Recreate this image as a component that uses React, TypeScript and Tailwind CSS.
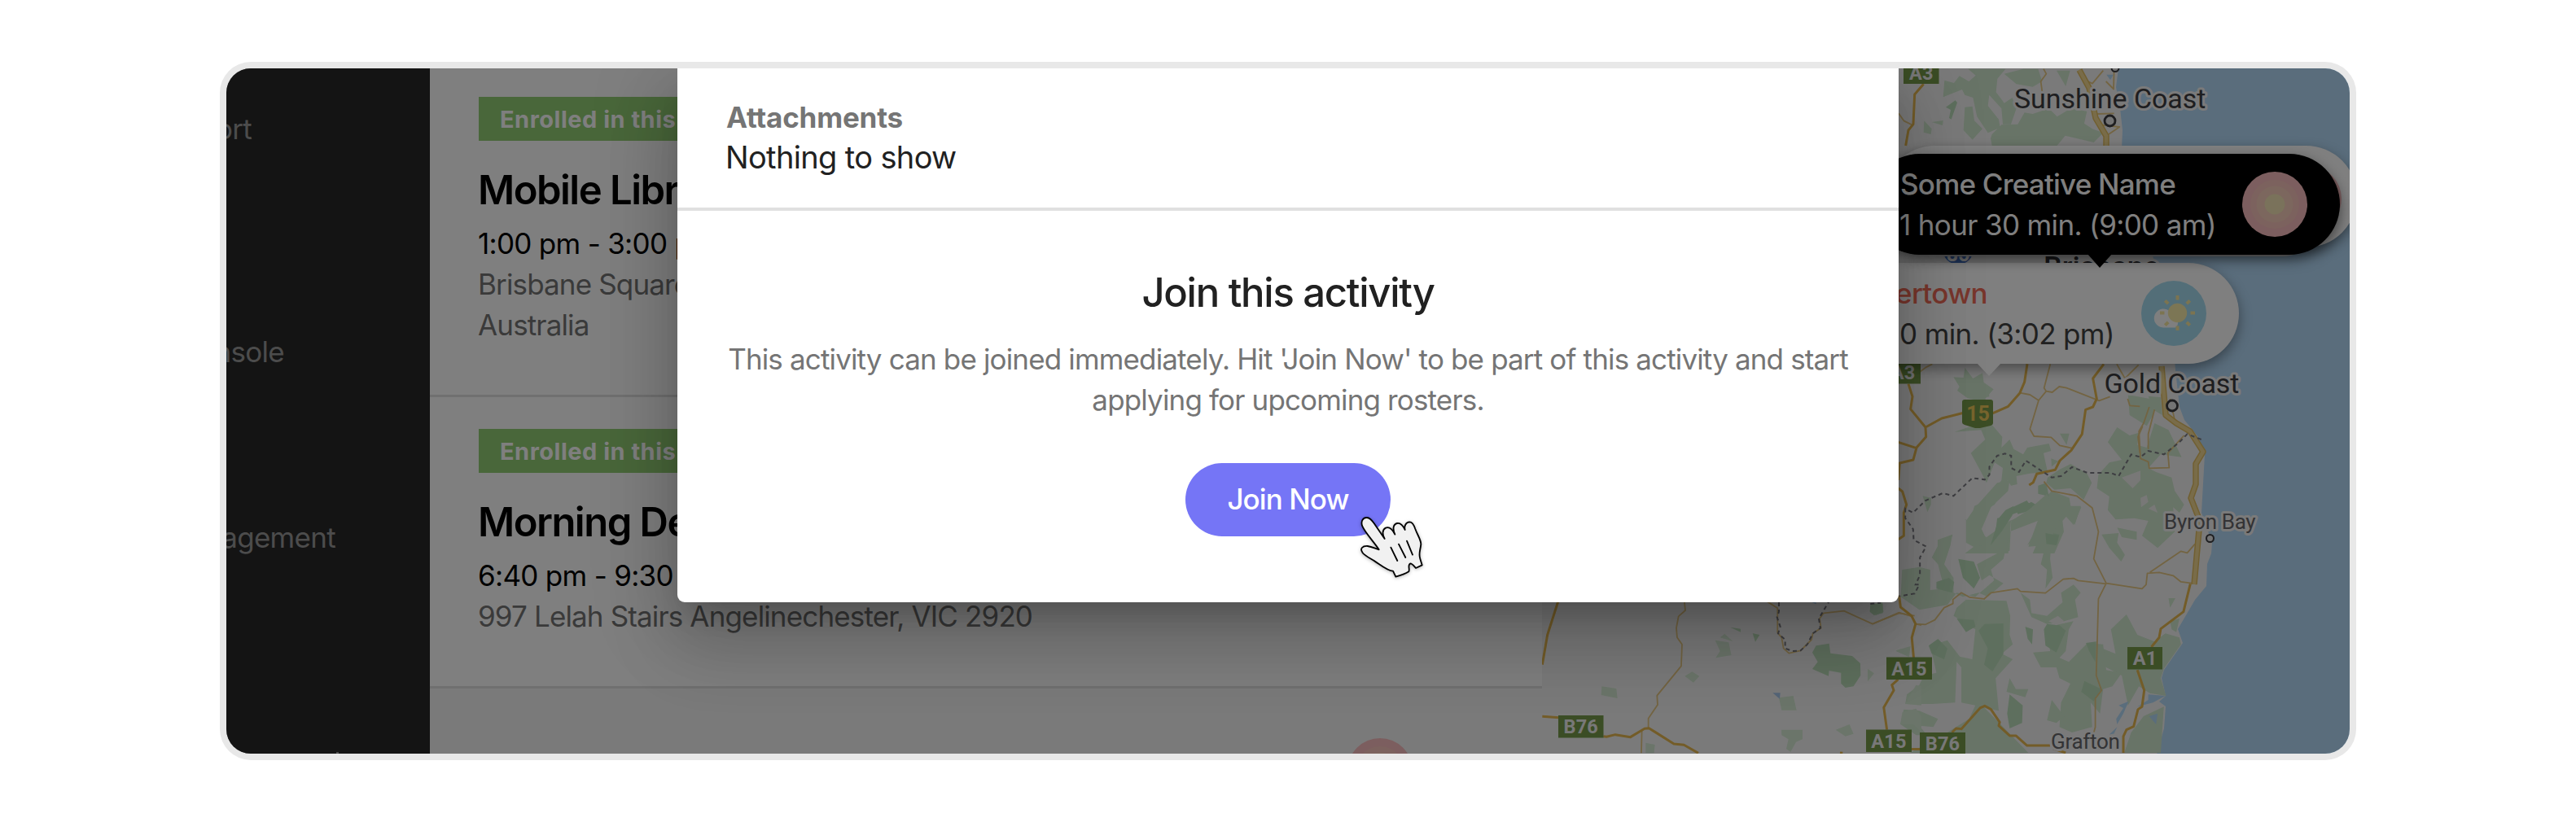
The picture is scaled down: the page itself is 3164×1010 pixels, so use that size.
import type { ReactNode } from "react";

const navItems = [
  { label: "Report", width: "w-[31px]", offset: "mt-[49px]" },
  { label: "Console", width: "w-[71px]", offset: "mt-[224px]" },
  { label: "Management", width: "w-[134px]", offset: "mt-[178px]" },
];

function Sidebar() {
  return (
    <nav className="flex w-[250px] shrink-0 flex-col bg-[#282828] text-[35px] leading-[50px] tracking-[-0.02em] text-[#989898]">
      {navItems.map((item) => (
        <div key={item.label} className={`flex justify-end whitespace-nowrap ${item.width} ${item.offset}`}>
          {item.label}
        </div>
      ))}
      <div className="mt-[239px] ml-[135px] h-[3px] w-[3px] bg-[#989898]" />
    </nav>
  );
}

type Activity = { title: string; time: string; address: string[] };

const activities: Activity[] = [
  {
    title: "Mobile Library",
    time: "1:00 pm - 3:00 pm",
    address: ["Brisbane Square Library, Brisbane,", "Australia"],
  },
  {
    title: "Morning Delivery",
    time: "6:40 pm - 9:30 pm",
    address: ["997 Lelah Stairs Angelinechester, VIC 2920"],
  },
];

function ActivityCard({ activity }: { activity: Activity }) {
  return (
    <article className="border-b-[3px] border-[#e0e0e0] bg-white px-[60px] pb-[61px] whitespace-nowrap">
      <div className="flex h-[54px] w-[420px] items-center bg-[#92ce74] pt-[2px] pl-[26px] text-[29px] font-bold tracking-[0.017em] text-white">
        Enrolled in this activity
      </div>
      <h3 className="mt-[31px] -ml-px text-[49px] leading-[60px] font-semibold tracking-[-0.031em] text-black">
        {activity.title}
      </h3>
      <p className="mt-[10px] -ml-px text-[35px] leading-[50px] tracking-[-0.02em] text-black">{activity.time}</p>
      {activity.address.map((line) => (
        <p key={line} className="-ml-px text-[35px] leading-[50px] tracking-[-0.0245em] text-[#757575]">
          {line}
        </p>
      ))}
    </article>
  );
}

/* Concentric sunrise badge used by the morning activities. */
function SunriseIcon({ className }: { className: string }) {
  return (
    <svg viewBox="0 0 80 80" className={className}>
      <circle cx="40" cy="40" r="40" fill="#f8bcbe" />
      <circle cx="40" cy="40" r="30" fill="#f8c4bc" />
      <circle cx="40" cy="40" r="22.5" fill="#f8cebc" />
      <circle cx="40" cy="40" r="12.5" fill="#f4e4b6" />
    </svg>
  );
}

function PartlyCloudyIcon({ className }: { className: string }) {
  const rays = [0, 45, 90, 135, 180, 225, 270, 315];
  return (
    <svg viewBox="0 0 80 80" className={className}>
      <circle cx="40" cy="40" r="40" fill="#a6dcf0" />
      <path d="M27 57.500a11.500 11.500 0 1 1 9-19l9 12a8 8 0 0 1-3 7z" fill="#fff" />
      {rays.map((angle) => (
        <path key={angle} d="M44.500 18v5.500" stroke="#f8e9a0" strokeWidth="4" transform={`rotate(${angle} 44.500 39.500)`} />
      ))}
      <circle cx="44.500" cy="39.500" r="11.700" fill="#f9ecaa" />
    </svg>
  );
}

function Shield({ x, y, w, children }: { x: number; y: number; w: number; children: ReactNode }) {
  return (
    <g>
      <rect x={x} y={y} width={w} height="27.500" fill="#769a4a" />
      <text
        x={x + w / 2}
        y={y + 22}
        textAnchor="middle"
        fill="#f0f0f0"
        className="font-[Roboto] text-[23.500px] font-bold tracking-[0.01em]"
      >
        {children}
      </text>
    </g>
  );
}

function MapCanvas() {
  return (
    <svg viewBox="1894 84 992 842" width="992" height="842" className="block">
      <rect x="1894" y="84" width="992" height="842" fill="#f5f5f5" />

      {/* Ocean */}
      <path
        d="M2602 84L2599 107L2604 133L2607 160L2606 182L2640 300L2668 400L2672 455L2677 500L2683 516L2700 537L2708 558L2704 630L2717 667L2716 680L2711 693L2710 720L2696 737L2675 773L2681 790L2658 823L2655 833L2660 855L2652 862L2660 868L2658 895L2649 927H2886V84Z"
        fill="#b4daf8"
      />

      {/* Forests and reserves */}
      <g transform="translate(2330 80) scale(.3333)" fill="#d0e8ce">
        <path d="M175 56L210 66L230 40L265 60L290 38L262 14H345L400 14L370 50L365 100L388 130L395 140L425 120L440 160L420 218H390L385 160L340 110L335 150L375 200L380 230L335 250L295 190L280 120L250 110L240 90L170 118Z" />
        <path d="M395 32L465 14H520L535 60L500 80L440 70Z" />
        <path d="M350 255L385 220L445 218L470 175L500 180L560 160L590 190L640 160L700 170L690 215L720 235L760 250L725 285L620 260L590 297H440L350 297L345 270Z" />
        <path d="M588 20H638L622 78Z" />
        <path d="M250 155L278 152L285 205L315 235L278 275L245 240Z" />
        <path d="M100 205L128 235L125 255L98 248ZM128 210L170 204L168 222Z" />
        <path d="M180 155L215 130L222 138L200 200L192 195L198 165Z" fill="#bcdfbc" />
      </g>
      <g transform="translate(2330 440) scale(.3333)" fill="#d0e8ce">
        <path d="M208 70L245 72L250 35L280 75L315 55L320 90L356 115L325 150L335 165L260 148L222 120L230 105Z" />
        <path d="M212 272L262 255L345 240L388 290L385 330L415 300L430 335L465 355L480 330L560 315L568 342L540 350L555 420L490 425L440 435L443 465L420 470L408 450L360 540L320 560L300 590L290 640L330 660L415 600L470 580L540 520L570 490L635 515L640 545L678 545L655 615L632 575L610 600L615 640L580 720H500L530 650L480 690L520 620L525 580L420 600L410 720H250L290 690L270 650L268 610L250 595L272 600L285 545L340 520L385 450L390 405L360 385L330 460L310 420L272 350L325 300L310 265Z" />
        <path d="M150 670L205 650L195 690L165 720H150ZM95 508L125 515L125 540L112 568Z" />
        <path d="M555 440L600 410L640 390L700 425L718 460L688 522L640 480L580 485L550 460Z" />
        <path d="M568 370L595 380L570 400ZM600 278H635L625 320Z" />
        <path d="M440 560L495 530L520 545L500 560L445 575ZM400 560L430 545L425 580L385 640L345 690L375 590Z" fill="#bcdfbc" />
        <path d="M545 640L598 650L590 685L548 680ZM520 470L550 460L560 510L520 500Z" fill="#c3e3c3" />
      </g>
      <g transform="translate(2300 480) scale(.38265 .3333)" fill="#d0e8ce">
        <path d="M290 0H372L375 22L335 30L300 15Z" />
        <path d="M785 135L825 165L855 155L850 200L880 210L905 120L950 145L992 245L925 235L885 285L910 300L960 320L970 370L1000 420L985 450L965 430L970 520L915 580L865 535L885 480L840 470L780 475L755 440L760 390L720 360L725 310L760 265L800 255L755 190Z" />
        <path d="M820 15L890 30L905 80L880 130L825 90ZM885 20L925 25L930 90L900 70Z" />
        <path d="M735 530L790 525L785 560L810 605L798 630L760 580ZM785 505L848 520V550L800 540Z" />
        <path d="M815 825L850 900L905 925L940 895L985 910L990 935L935 1025L925 1060L942 1125L890 1115L855 1090L820 1160L800 1050L700 990L715 940L780 970L765 880Z" />
        <path d="M515 965L570 960L560 900L585 865L645 850L630 880L620 960L600 985L630 1000L690 930L740 935L750 1030L800 1040L770 1090L740 1100L730 1190L700 1150L705 1240L640 1260L600 1240L605 1150L635 1080L600 1060L590 1020L540 1020Z" />
        <path d="M475 745L505 770L510 820L560 830L610 780L605 745L645 715L668 745L650 770L660 835L600 855L560 860L510 835Z" />
        <path d="M270 800L300 770L430 775L442 830L440 900L450 935L415 970L450 990L395 1060L405 1180L360 1170L500 1335H120L240 1260L310 1210L330 1160L285 1150V1020L270 1000L265 1150L190 1155L105 1155L110 1120L150 1085L165 1050L205 1040L185 940L240 920L280 980L320 990L330 880L260 830Z" />
        <path d="M90 1230L100 1175L150 1180L210 1210L195 1240L150 1235L175 1270L140 1270ZM75 960L120 945L115 980Z" />
        <path d="M95 660L150 650L185 660V735L230 730L210 640L190 615L215 560L255 530L250 570L230 640L260 690V745L290 760L340 745L370 760L420 710L375 680L350 700L335 640L400 600L440 590L445 480L500 440L560 380L580 430L670 430L645 495L610 450L575 540L570 620L578 690L555 730L560 660L540 640L555 570L500 575L530 480L440 520L420 620L380 660L390 700L330 760L270 745L240 790L150 808L90 760Z" />
        <path d="M300 480L330 430L400 340L440 330L435 370L380 430L350 510L370 560L330 580L300 560Z" />
        <path d="M440 1060L460 1100L500 1100L490 1130L430 1110ZM560 1215L575 1140L615 1200L590 1225ZM950 765H972L955 800ZM955 850L985 840L975 890L960 880Z" />
        <path d="M870 1200L935 1165L925 1335H808L830 1260Z" />
        <g fill="#bcdfbc">
          <path d="M275 620L325 630L345 690L325 730L290 690ZM205 705L245 690L262 705L255 745L205 730Z" />
          <path d="M340 885L360 860L420 858V970L385 1035L358 1010L370 950Z" />
          <path d="M555 525L598 535L590 570L558 565ZM400 470L425 465L415 505L395 520ZM430 440L495 405L512 430L440 460Z" />
          <path d="M560 860L600 865L620 885L590 965L555 940L550 880ZM490 870L515 880L512 935L498 915Z" />
          <path d="M440 1120L482 1160L480 1225L440 1245L432 1190ZM680 1070L735 1100L710 1145L670 1110ZM685 930L718 925L715 1000L695 960Z" />
          <path d="M180 940L210 915L240 950L230 990L190 970ZM270 840L325 845L330 870L300 890Z" />
          <path d="M0 790L30 780L35 815L10 828Z" />
        </g>
        <g fill="#f0f0ee">
          <path d="M565 850L595 830L615 850L590 865ZM860 395L880 385L885 410L862 430ZM800 320L860 295L860 330L835 360ZM885 435L905 420L915 450Z" />
        </g>
        <g fill="#b4daf8">
          <path d="M790 1160L822 1145L805 1190L785 1230L782 1210L805 1170ZM888 1200L915 1190L910 1230ZM885 1120L940 1125L900 1150L850 1165L885 1140ZM760 1268L785 1240L775 1265Z" />
        </g>
      </g>
      <g transform="translate(1860 700) scale(.3333)" fill="#d6ebd4">
        <path d="M740 260L790 268L800 315L742 325L758 300ZM758 250L775 236L805 264ZM628 392L655 376L682 392L660 416ZM322 430L376 438L380 474L320 462ZM484 638L518 645L515 676H484Z" />
        <path d="M975 472L1028 465L1040 518H985ZM984 590H1062V625L1038 635L1018 672L1002 660L1010 625L985 610ZM1184 590L1235 570L1250 605L1220 614ZM1302 365L1326 382L1302 412ZM1405 298L1460 282L1455 320Z" />
        <path d="M1098 305L1112 280L1160 272L1165 308L1245 318L1275 345L1276 390L1250 430L1220 435L1204 420V380L1160 372L1158 392L1098 366L1118 340ZM878 234L904 240L888 266ZM796 212L834 218V230ZM1312 125H1358V160L1325 168L1310 155Z" fill="#bddfbb" />
        <path d="M1440 495L1480 425L1500 430V500ZM1422 570L1430 525L1480 512L1500 540V600L1470 570Z" />
        <path d="M952 454H980L978 476ZM1096 120H1112V127Z" fill="#a9cbee" />
      </g>
      <g transform="translate(2330 80) scale(.3333)" fill="#b4daf8">
        <path d="M772 35H798L786 55Z" />
      </g>

      {/* Secondary roads */}
      <g fill="none" stroke="#e6c884" strokeWidth="1.800" strokeLinejoin="round">
        <path vectorEffect="non-scaling-stroke" transform="translate(2330 80) scale(.3333)" d="M6 178L25 205L55 220M540 14L550 32L530 60L535 98M680 50L720 68L760 20M735 180L800 178M770 60L800 90M750 220L820 228L780 255M800 20L798 90" />
        <path vectorEffect="non-scaling-stroke" transform="translate(2330 440) scale(.3333)" d="M85 50L105 35L130 22M565 22L542 110L550 122L522 156L490 262L505 288L568 292L600 322L645 332M452 128L490 135L522 156M550 122L572 126L598 105L625 110L745 157L785 142M810 22L840 75L890 25M850 150L858 175L895 178M905 252L888 290L895 350" />
        <path vectorEffect="non-scaling-stroke" transform="translate(2300 480) scale(.38265 .3333)" d="M550 335L575 370L655 388L705 432L725 520L710 620L750 710L725 768L718 1050L735 1105L715 1135V1240L708 1270M750 710L865 730L878 715L882 673L920 670L965 682L990 705L1040 712M890 670L990 592L1010 598L1035 565M750 712L660 700L645 692L612 695L555 746L475 740L465 730L380 745L358 768L312 762L285 745L258 770V785L230 800L200 845L170 862L138 860M0 860L85 820L135 830M888 60L870 120L855 150L860 250L885 262L888 286L952 284L948 230L1000 165M905 70L885 160V215M930 20L945 90M955 30L970 110" />
        <path vectorEffect="non-scaling-stroke" transform="translate(1860 700) scale(.3333)" d="M625 100L630 150L605 172L597 215L600 250L618 275L615 355L526 464L528 498L494 548V584M470 590L468 676M930 116L970 142V232L985 250L992 290L1012 308L1055 298L1095 258L1100 235L1130 215L1125 180L1140 160L1215 152L1320 200L1418 158L1465 172M1478 200L1500 204" />
      </g>

      {/* Main roads */}
      <g fill="none" stroke="#e6b850" strokeWidth="3" strokeLinejoin="round">
        <path vectorEffect="non-scaling-stroke" transform="translate(2330 80) scale(.3333)" d="M98 70L65 108L60 218L42 240L32 297" />
        <path vectorEffect="non-scaling-stroke" transform="translate(2330 440) scale(.3333)" d="M42 95L57 142L50 188L105 255L165 222L245 202M352 204L410 178L452 130L470 88L480 22M105 255L107 290L72 330L60 375L10 387L5 450M5 310L72 332M5 480L20 492L35 540L25 570V655L5 668M762 22L722 75L736 150L722 180L695 190L682 280L642 340L600 378L583 412L515 427L502 458L487 468" />
        <path vectorEffect="non-scaling-stroke" transform="translate(2300 480) scale(.38265 .3333)" d="M85 755L90 798L125 830L138 860L126 910L132 985M82 1065L62 1085L68 1105L36 1168L46 1250M1020 712L998 815L925 878L920 910L895 945M850 1030L872 1105L865 1165L852 1175L838 1238L815 1250L805 1275V1335M255 1260L268 1245L285 1247L345 1170L360 1162L380 1175L408 1222L405 1235L440 1272L460 1272L495 1308H570M122 1322H155M580 1320L620 1335" />
        <path vectorEffect="non-scaling-stroke" transform="translate(1860 700) scale(.3333)" d="M162 115L122 240L103 350M103 541L165 545M328 614L340 616L372 608L428 617L480 586L496 584L588 642L625 646L678 676M1200 675L1210 676" />
      </g>

      {/* Motorways */}
      <g fill="none" strokeLinejoin="round">
        <g stroke="#e2be62" strokeWidth="7.500">
          <path d="M2554 86L2566 108L2574 145L2587 167V182" />
          <path d="M2655 450L2660 510L2673 520L2690 530L2706 555L2697 570L2697 595L2691 612L2702 640L2695 718" />
        </g>
        <g stroke="#f2d892" strokeWidth="4.500">
          <path d="M2554 86L2566 108L2574 145L2587 167V182" />
          <path d="M2655 450L2660 510L2673 520L2690 530L2706 555L2697 570L2697 595L2691 612L2702 640L2695 718" />
        </g>
      </g>

      {/* State border */}
      <g fill="none" stroke="#7d7d84" strokeWidth="2" strokeDasharray="5 4">
        <path vectorEffect="non-scaling-stroke" transform="translate(2300 480) scale(.38265 .3333)" d="M1055 180L1010 160L985 190L935 235L885 222L860 245L830 235L790 315L765 303H690L640 282L605 315L575 320L492 258L470 300L445 285V240L425 232L400 240L375 280V310L360 328L320 322L260 388L225 378L170 405L130 450L105 435V470L130 510L132 550L172 575L152 615V680L138 715L150 715L135 748L85 758" />
        <path vectorEffect="non-scaling-stroke" transform="translate(1860 700) scale(.3333)" d="M975 120V155L968 175L980 210L972 235L998 258V290L1025 300L1055 298L1080 275L1100 235L1128 215L1122 180L1160 116M1312 126L1350 122" />
      </g>

      {/* Road shields */}
      <Shield x={2338} y={75.500} w={43.500}>A3</Shield>
      <Shield x={2316} y={444} w={43}>A3</Shield>
      <Shield x={1914} y={879} w={55.500}>B76</Shield>
      <Shield x={2317} y={807.500} w={56}>A15</Shield>
      <Shield x={2292} y={896.500} w={56}>A15</Shield>
      <Shield x={2358} y={900} w={56}>B76</Shield>
      <Shield x={2613} y={795} w={43}>A1</Shield>
      <path d="M2413 491h32q3 0 3 3v26q0 2-3 3l-13 3h-6l-13-4q-3-1-3-3v-25q0-3 3-3Z" fill="#769a4a" />
      <text x="2429.500" y="517" textAnchor="middle" fill="#efc85a" className="font-[Roboto] text-[25px] font-bold">
        15
      </text>
      <circle cx="2405" cy="306" r="19" fill="#4878cc" />
      <text x="2405" y="321" textAnchor="middle" fill="#fff" className="font-[Roboto] text-[25px] font-bold">
        85
      </text>

      {/* Places */}
      <g stroke="#f5f5f5" strokeWidth="6" strokeLinejoin="round" style={{ paintOrder: "stroke" }} className="font-[Roboto]">
        <text x="2474" y="133" fill="#3c3c40" className="text-[34px] tracking-[-0.002em]">Sunshine Coast</text>
        <text x="2584.500" y="483" fill="#3c3c40" className="text-[34px] tracking-[-0.004em]">Gold Coast</text>
        <text x="2510" y="341" fill="#303034" className="text-[36px] font-medium">Brisbane</text>
        <text x="2658" y="650" fill="#66666a" className="text-[26px] tracking-[-0.012em]">Byron Bay</text>
        <text x="2519" y="920" fill="#66666a" className="text-[26px] tracking-[-0.012em]">Grafton</text>
      </g>
      <g fill="#e8e8e8" stroke="#3c3c40">
        <circle cx="2591.500" cy="148.500" r="6.500" strokeWidth="2.800" />
        <circle cx="2668" cy="498.500" r="6.500" strokeWidth="2.800" />
        <circle cx="2598" cy="83.500" r="4.500" strokeWidth="2" />
        <circle cx="2714.500" cy="661.500" r="4.500" strokeWidth="2" />
      </g>
    </svg>
  );
}

function MapMarkers() {
  return (
    <div className="absolute inset-0 overflow-hidden">
      <div className="absolute top-[239px] left-[200px] h-[124px] w-[656px] rounded-full bg-white shadow-[0_6px_16px_rgba(0,0,0,0.4)]">
        <div className="flex h-full items-center justify-end gap-[33px] pr-[40px] whitespace-nowrap">
          <div className="text-right text-[35px] leading-[50px] tracking-[-0.0185em]">
            <p className="pr-[156px] font-medium text-[#f06c58]">Watertown</p>
            <p className="text-[#424242]">1 hour 30 min. (3:02 pm)</p>
          </div>
          <PartlyCloudyIcon className="size-20 shrink-0" />
        </div>
        <div className="absolute top-[123px] left-[334px] size-0 border-x-[15px] border-t-[16px] border-x-transparent border-t-white" />
      </div>
      <div className="absolute top-[107px] left-[420px] h-[124px] w-[550px] rounded-full bg-white" />
      <div className="absolute top-[95px] left-[420px] h-[125px] w-[581px] rounded-full bg-white shadow-[0_6px_16px_rgba(0,0,0,0.4)]">
        <SunriseIcon className="absolute top-[25px] left-[482px] size-20" />
      </div>
      <div className="absolute top-[105px] left-[402px] h-[124px] w-[578px] rounded-full bg-black shadow-[0_6px_16px_rgba(0,0,0,0.5)]">
        <div className="flex h-full items-center justify-between pr-[40px] pl-[37px] whitespace-nowrap">
          <div className="text-[35px] leading-[50px] tracking-[-0.0185em] text-white">
            <p className="pl-px font-medium tracking-[-0.0225em]">Some Creative Name</p>
            <p>1 hour 30 min. (9:00 am)</p>
          </div>
          <SunriseIcon className="size-20 shrink-0" />
        </div>
        <div className="absolute top-[123px] left-[268px] size-0 border-x-[15.500px] border-t-[17px] border-x-transparent border-t-black" />
      </div>
    </div>
  );
}

function HandCursor() {
  return (
    <svg
      viewBox="800 270 260 250"
      className="absolute top-[546px] left-[834.700px] h-[83.300px] w-[86.700px] overflow-visible drop-shadow-[0_1px_2px_rgba(0,0,0,0.3)]"
    >
      <path
        d="M819 320C811 301 823 287 836 288C847 289 855 299 862 309L901 366C891 350 893 331 905 326C920 320 930 332 939 350C930 330 932 313 947 309C962 306 970 320 976 333C972 318 980 305 993 304C1004 304 1010 318 1014 330C1022 352 1035 370 1035 386C1033 408 1025 420 1032 440L1039 463L1016 474C1009 466 1003 457 996 457C984 462 995 478 990 487C975 497 958 502 942 506L932 485C912 485 880 458 865 449C848 438 829 430 820 418C808 402 820 392 838 393C856 396 866 402 880 406C862 378 830 345 819 320Z"
        fill="#f1f1f1"
        stroke="#000"
        strokeWidth="5.500"
        strokeLinejoin="round"
      />
      <path d="M924 398L948 447M953 386L978 435M983 374L1004 425" fill="none" stroke="#000" strokeWidth="5.500" strokeLinecap="round" />
    </svg>
  );
}

function JoinDialog() {
  return (
    <section
      role="dialog"
      className="absolute top-0 left-[554px] h-[656px] w-[1500px] rounded-b-[9px] bg-white shadow-[0_24px_33px_-15px_rgba(0,0,0,0.2),0_53px_84px_7px_rgba(0,0,0,0.14),0_20px_101px_18px_rgba(0,0,0,0.12)]"
    >
      <div className="border-b-4 border-[#e0e0e0] px-[60px] pt-[36px] pb-[37px]">
        <h4 className="text-[35px] leading-[49px] font-bold tracking-[-0.006em] text-[#757575]">Attachments</h4>
        <p className="-ml-px text-[38px] leading-[49px] tracking-[-0.017em] text-[#212121]">Nothing to show</p>
      </div>
      <div className="flex flex-col items-center pt-[71px] text-center">
        <h2 className="text-[49px] leading-[60px] font-medium tracking-[-0.026em] text-[#212121]">Join this activity</h2>
        <p className="mt-[26px] text-[35px] leading-[50px] tracking-[-0.0243em] whitespace-nowrap text-[#757575]">
          This activity can be joined immediately. Hit &#39;Join Now&#39; to be part of this activity and start
          <br />
          applying for upcoming rosters.
        </p>
        <button className="mt-[53px] h-[90px] w-[252px] rounded-full bg-[#7575f6] pb-[2px] text-[35px] font-medium tracking-[-0.026em] text-white">
          Join Now
        </button>
      </div>
      <HandCursor />
    </section>
  );
}

export default function App() {
  return (
    <main className="flex h-[1010px] w-[3164px] bg-white px-[270px] pt-[76px] font-[Inter,sans-serif]">
      <div className="h-[858px] w-[2624px] rounded-[38px] bg-[#e8e8e8] p-2">
        <div className="relative flex h-[842px] w-[2608px] overflow-hidden rounded-[30px]">
          <Sidebar />
          <div className="flex w-[1366px] shrink-0 flex-col bg-white">
            <div className="h-[35px]" />
            {activities.map((activity, index) => (
              <div key={activity.title} className={index ? "bg-white pt-[39px]" : "bg-white"}>
                <ActivityCard activity={activity} />
              </div>
            ))}
            <div className="flex flex-1 justify-end overflow-hidden bg-[#f5f5f5] pt-[61px] pr-[159px]">
              <SunriseIcon className="size-20 shrink-0" />
            </div>
          </div>
          <div className="relative w-[992px] shrink-0">
            <MapCanvas />
            <MapMarkers />
          </div>
          <div className="absolute inset-0 bg-black/50" />
          <JoinDialog />
        </div>
      </div>
    </main>
  );
}
